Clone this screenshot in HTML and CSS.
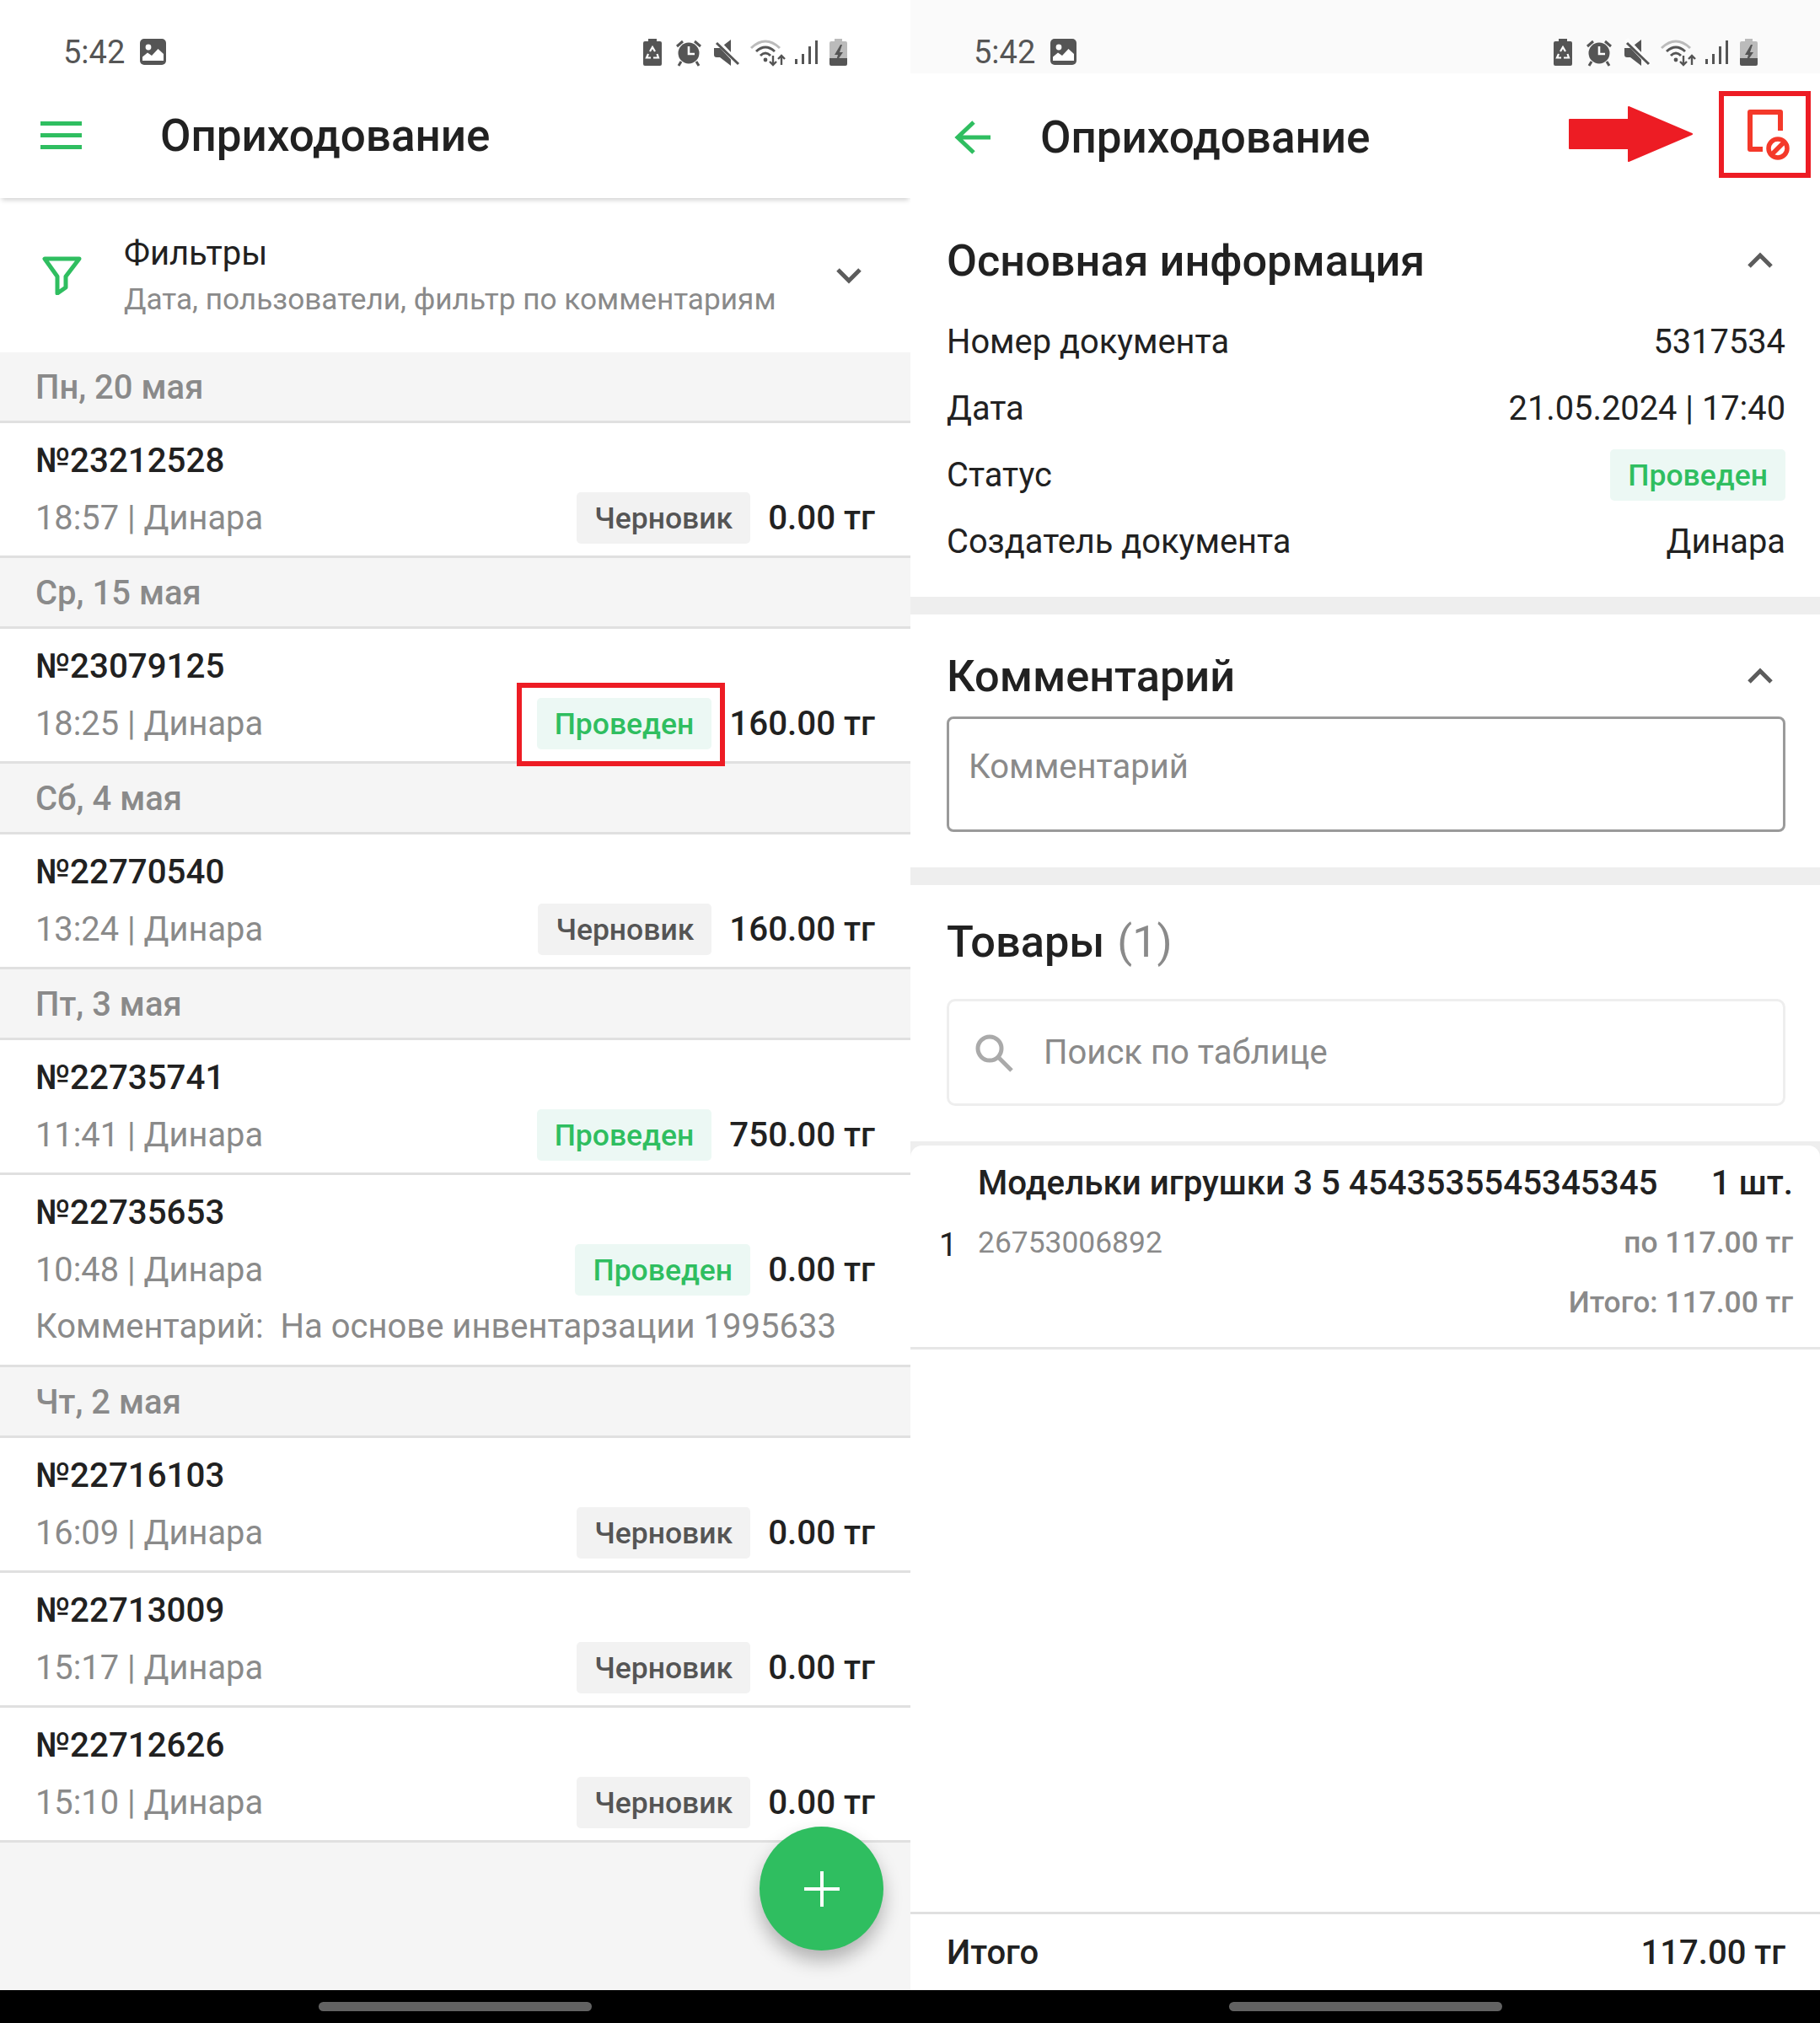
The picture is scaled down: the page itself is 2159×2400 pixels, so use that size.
FILE: index.html
```html
<!DOCTYPE html>
<html lang="ru">
  <head>
    <meta charset="UTF-8" />
    <title>Оприходование</title>
    <link rel="stylesheet" href="styles.css">
  </head>
  <body>
    <svg class="defs" width="0" height="0">
      <symbol id="st-image" viewBox="0 0 31 31">
        <rect width="31" height="31" rx="5" fill="#555" />
        <circle cx="10" cy="10" r="3.4" fill="#fff" />
        <path d="M3 26V21.5L9 16.5 14 20 21.5 12 28 18V26Z" fill="#fff" />
      </symbol>
      <symbol id="st-icons" viewBox="0 0 250 40">
        <!-- battery saver -->
        <path d="M9 4H19V7H23Q25 7 25 9V34Q25 36 23 36H5Q3 36 3 34V9Q3 7 5 7H9Z" fill="#555" />
        <path d="M11 19L14 14 17 19M19.5 22L21 26.5H15M12 26.5H7L9 22" stroke="#fff" stroke-width="2.2" fill="none" />
        <!-- alarm -->
        <circle cx="57" cy="21" r="12.5" fill="#555" />
        <path d="M57 13V22H64" stroke="#fff" stroke-width="2.6" fill="none" />
        <path d="M43 13L50 7M71 13L64 7M48 31L45 36M66 31L69 36" stroke="#555" stroke-width="3" fill="none" />
        <!-- mute -->
        <path d="M87 15H94L107 5V36L94 26H90Q87 26 87 23Z" fill="#555" />
        <path d="M89 5L117 35" stroke="#fff" stroke-width="6" fill="none" />
        <path d="M90 9L116 34" stroke="#555" stroke-width="3" fill="none" />
        <!-- wifi with traffic -->
        <path d="M131 15Q148 -1 165 15" stroke="#bbb" stroke-width="3" fill="none" />
        <path d="M137 19Q148 9 159 19M142 24Q148 18 154 24" stroke="#555" stroke-width="3" fill="none" />
        <circle cx="148" cy="29" r="2.4" fill="#555" />
        <path d="M157 24V35M153 31L157 35 161 31M167 35V24M163 28L167 24 171 28" stroke="#555" stroke-width="2.4" fill="none" />
        <!-- signal -->
        <path d="M183 28H186V34H183ZM191 22H194V34H191ZM199 13H202V34H199ZM207 6H210V34H207Z" fill="#555" />
        <!-- battery charging -->
        <path d="M230 4H239V7H243Q245 7 245 9V27H224V9Q224 7 226 7H230Z" fill="#bbb" />
        <path d="M224 27H245V34Q245 36 243 36H226Q224 36 224 34Z" fill="#555" />
        <path d="M237 11L230 23H234L231 33 240 20H236L239 11Z" fill="#555" />
      </symbol>
    </svg>

    <div class="screen">
      <section class="panel">
        <div class="statusbar">
          <span class="clock">5:42</span>
          <svg class="st-image"><use href="#st-image" /></svg>
          <svg class="st-icons"><use href="#st-icons" /></svg>
        </div>
        <header class="topbar">
          <div class="burger"><i></i><i></i><i></i></div>
          <h1>Оприходование</h1>
        </header>
        <div class="filters">
          <svg class="filter-icon" viewBox="0 0 47 46">
            <path d="M3 3H44L28 24V37L18 44V24Z" fill="none" stroke="#2fbe60" stroke-width="5" stroke-linejoin="round" />
          </svg>
          <div class="filter-text">
            <div class="filter-title">Фильтры</div>
            <div class="filter-sub">Дата, пользователи, фильтр по комментариям</div>
          </div>
          <svg class="chevron" viewBox="0 0 32 20">
            <path d="M3 3L16 16 29 3" fill="none" stroke="#5c5c5c" stroke-width="5" />
          </svg>
        </div>

        <div class="list">
          <div class="day">Пн, 20 мая</div>
          <div class="doc">
            <div class="doc-num">№23212528</div>
            <div class="doc-line">
              <span class="doc-meta">18:57 | Динара</span>
              <span class="badge draft">Черновик</span>
              <span class="sum">0.00 тг</span>
            </div>
          </div>

          <div class="day">Ср, 15 мая</div>
          <div class="doc">
            <div class="doc-num">№23079125</div>
            <div class="doc-line">
              <span class="doc-meta">18:25 | Динара</span>
              <span class="badge done">Проведен</span>
              <span class="sum">160.00 тг</span>
            </div>
          </div>

          <div class="day">Сб, 4 мая</div>
          <div class="doc">
            <div class="doc-num">№22770540</div>
            <div class="doc-line">
              <span class="doc-meta">13:24 | Динара</span>
              <span class="badge draft">Черновик</span>
              <span class="sum">160.00 тг</span>
            </div>
          </div>

          <div class="day">Пт, 3 мая</div>
          <div class="doc">
            <div class="doc-num">№22735741</div>
            <div class="doc-line">
              <span class="doc-meta">11:41 | Динара</span>
              <span class="badge done">Проведен</span>
              <span class="sum">750.00 тг</span>
            </div>
          </div>
          <div class="doc">
            <div class="doc-num">№22735653</div>
            <div class="doc-line">
              <span class="doc-meta">10:48 | Динара</span>
              <span class="badge done">Проведен</span>
              <span class="sum">0.00 тг</span>
            </div>
            <div class="doc-comment">Комментарий:&nbsp; На основе инвентарзации 1995633</div>
          </div>

          <div class="day">Чт, 2 мая</div>
          <div class="doc">
            <div class="doc-num">№22716103</div>
            <div class="doc-line">
              <span class="doc-meta">16:09 | Динара</span>
              <span class="badge draft">Черновик</span>
              <span class="sum">0.00 тг</span>
            </div>
          </div>
          <div class="doc">
            <div class="doc-num">№22713009</div>
            <div class="doc-line">
              <span class="doc-meta">15:17 | Динара</span>
              <span class="badge draft">Черновик</span>
              <span class="sum">0.00 тг</span>
            </div>
          </div>
          <div class="doc">
            <div class="doc-num">№22712626</div>
            <div class="doc-line">
              <span class="doc-meta">15:10 | Динара</span>
              <span class="badge draft">Черновик</span>
              <span class="sum">0.00 тг</span>
            </div>
          </div>
        </div>

        <button class="fab">
          <svg viewBox="0 0 42 42"><path d="M21 0V42M0 21H42" stroke="#fff" stroke-width="4" /></svg>
        </button>
        <div class="mark mark-badge"></div>
        <div class="navbar"><i></i></div>
      </section>

      <section class="panel panel-detail">
        <div class="statusbar statusbar-grey">
          <span class="clock">5:42</span>
          <svg class="st-image"><use href="#st-image" /></svg>
          <svg class="st-icons"><use href="#st-icons" /></svg>
        </div>
        <header class="detailbar">
          <svg class="back" viewBox="0 0 44 42">
            <path d="M23 3L4 21 23 39M4 21H43" fill="none" stroke="#2fbe60" stroke-width="5" />
          </svg>
          <h1>Оприходование</h1>
        </header>

        <div class="section section-info">
          <div class="sec-head">
            <h2>Основная информация</h2>
            <svg class="chevron" viewBox="0 0 32 20"><path d="M3 17L16 4 29 17" fill="none" stroke="#5c5c5c" stroke-width="5" /></svg>
          </div>
          <div class="info-row"><span>Номер документа</span><span>5317534</span></div>
          <div class="info-row"><span>Дата</span><span>21.05.2024 | 17:40</span></div>
          <div class="info-row"><span>Статус</span><span class="badge done">Проведен</span></div>
          <div class="info-row"><span>Создатель документа</span><span>Динара</span></div>
        </div>

        <div class="section section-comment">
          <div class="sec-head">
            <h2>Комментарий</h2>
            <svg class="chevron" viewBox="0 0 32 20"><path d="M3 17L16 4 29 17" fill="none" stroke="#5c5c5c" stroke-width="5" /></svg>
          </div>
          <div class="comment-box">Комментарий</div>
        </div>

        <div class="section section-goods">
          <div class="sec-head">
            <h2>Товары <span class="count">(1)</span></h2>
          </div>
          <div class="search">
            <svg viewBox="0 0 46 46">
              <circle cx="18" cy="18" r="14" fill="none" stroke="#aaa" stroke-width="5" />
              <path d="M28 28L44 44" stroke="#aaa" stroke-width="5" />
            </svg>
            <span>Поиск по таблице</span>
          </div>
        </div>

        <div class="goods">
          <div class="good">
            <div class="good-idx">1</div>
            <div class="good-body">
              <div class="good-line good-name"><span>Модельки игрушки 3 5 4543535545345345</span><span>1 шт.</span></div>
              <div class="good-line good-sub"><span>26753006892</span><span class="good-price">по 117.00 тг</span></div>
              <div class="good-line good-sub good-total"><span></span><span class="good-price">Итого: 117.00 тг</span></div>
            </div>
          </div>
        </div>

        <div class="spacer"></div>
        <div class="totalbar"><span>Итого</span><span>117.00 тг</span></div>

        <svg class="red-arrow" viewBox="0 0 148 66">
          <path d="M1 16H71V1L146 33 71 65V50H1Z" fill="#ed1c24" stroke="#ed1c24" stroke-width="2" stroke-linejoin="round" />
        </svg>
        <div class="mark mark-action">
          <svg viewBox="0 0 50 62">
            <path d="M18 47H3V3H39V25" fill="none" stroke="#f4392a" stroke-width="6" stroke-linejoin="round" />
            <circle cx="36" cy="46" r="11" fill="none" stroke="#f4392a" stroke-width="5.5" />
            <path d="M29 53L43 39" stroke="#f4392a" stroke-width="5.5" />
          </svg>
        </div>
        <div class="navbar"><i></i></div>
      </section>
    </div>
  </body>
</html>
```

FILE: styles.css
```css
* {
  margin: 0;
  padding: 0;
  box-sizing: border-box;
}

body {
  font-family: Roboto, "Noto Sans", sans-serif;
  background-color: #fff;
  color: #212121;
}

.defs {
  position: absolute;
}

.screen {
  display: flex;
  width: 2159px;
  height: 2400px;
  overflow: hidden;
}

.panel {
  position: relative;
  width: 1080px;
  height: 2400px;
  display: flex;
  flex-direction: column;
  background-color: #f5f5f5;
}

.panel-detail {
  width: 1079px;
  background-color: #fff;
}

/* status bar */
.statusbar {
  height: 87px;
  flex: none;
  display: flex;
  align-items: center;
  padding: 36px 0 0 75px;
  background-color: #fff;
}

.statusbar-grey {
  background-color: #fafafa;
}

.clock {
  font-size: 38px;
  color: #555;
  width: 91px;
}

.st-image {
  width: 31px;
  height: 31px;
}

.st-icons {
  width: 250px;
  height: 40px;
  margin-left: 563px;
}

/* top bars */
.topbar {
  height: 148px;
  flex: none;
  display: flex;
  align-items: center;
  padding-left: 48px;
  background-color: #fff;
  box-shadow: 0 4px 6px -2px rgba(0, 0, 0, 0.2);
  position: relative;
}

.topbar h1,
.detailbar h1 {
  font-size: 53px;
  font-weight: 500;
  color: #212121;
}

.burger {
  width: 49px;
  margin-right: 93px;
  margin-top: -1px;
}

.burger i {
  display: block;
  height: 5px;
  margin: 9px 0;
  background-color: #2fbe60;
}

.filters {
  height: 183px;
  flex: none;
  display: flex;
  align-items: center;
  padding-left: 50px;
  background-color: #fff;
}

.filter-icon {
  width: 47px;
  height: 46px;
  margin-right: 50px;
}

.filter-text {
  flex: 1;
  padding-top: 2px;
}

.filter-title {
  font-size: 40px;
  line-height: 54px;
}

.filter-sub {
  font-size: 35.2px;
  line-height: 54px;
  color: #8a8a8a;
}

.chevron {
  width: 32px;
  height: 20px;
  margin-right: 57px;
}

/* document list */
.day {
  height: 84px;
  display: flex;
  align-items: center;
  padding: 2px 42px 0;
  font-size: 40px;
  font-weight: 500;
  color: #8a8a8a;
  border-bottom: 3px solid #e0e0e0;
}

.doc {
  padding: 21px 42px 14px;
  background-color: #fff;
  border-bottom: 3px solid #e0e0e0;
}

.doc-num {
  font-size: 40.3px;
  font-weight: 500;
  line-height: 48px;
}

.doc-line {
  display: flex;
  align-items: center;
  gap: 21px;
  margin-top: 13px;
}

.doc-meta {
  flex: 1;
  font-size: 39.8px;
  color: #8a8a8a;
}

.sum {
  font-size: 40.3px;
  font-weight: 500;
}

.badge {
  height: 61px;
  display: flex;
  align-items: center;
  padding: 0 21px;
  font-size: 35.5px;
  font-weight: 500;
  border-radius: 5px;
}

.draft {
  background-color: #f2f2f2;
  color: #555;
}

.done {
  background-color: #ecf8f4;
  color: #2fbe60;
}

.doc-comment {
  font-size: 40px;
  line-height: 48px;
  color: #8a8a8a;
  margin: 13px 0 7px;
}

.fab {
  position: absolute;
  left: 901px;
  top: 2167px;
  width: 147px;
  height: 147px;
  border: none;
  border-radius: 50%;
  background-color: #2fbe60;
  box-shadow: 0 12px 22px rgba(0, 0, 0, 0.28);
  display: flex;
  align-items: center;
  justify-content: center;
}

.fab svg {
  width: 42px;
  height: 42px;
}

/* home indicator */
.navbar {
  position: absolute;
  left: 0;
  right: 0;
  bottom: 0;
  height: 39px;
  background-color: #000;
  display: flex;
  justify-content: center;
  padding-top: 14px;
}

.navbar i {
  display: block;
  width: 324px;
  height: 11px;
  border-radius: 6px;
  background-color: #626262;
}

/* red annotations */
.mark {
  position: absolute;
  border: 6px solid #ed1c24;
}

.mark-badge {
  left: 613px;
  top: 810px;
  width: 247px;
  height: 99px;
}

.mark-action {
  left: 959px;
  top: 108px;
  width: 109px;
  height: 103px;
}

.mark-action svg {
  position: absolute;
  left: 28px;
  top: 16px;
  width: 50px;
  height: 62px;
}

.red-arrow {
  position: absolute;
  left: 781px;
  top: 126px;
  width: 148px;
  height: 66px;
}

/* detail panel */
.detailbar {
  height: 149px;
  flex: none;
  display: flex;
  align-items: center;
  padding: 2px 0 0 52px;
}

.back {
  width: 44px;
  height: 42px;
  margin-right: 58px;
}

.section {
  padding: 0 41px 0 43px;
  border-bottom: 21px solid #eee;
}

.section-goods {
  border-bottom: none;
  padding-bottom: 42px;
}

.section-info {
  padding-bottom: 26px;
}

.section-comment {
  padding-bottom: 42px;
}

.sec-head {
  height: 80px;
  margin-top: 33px;
  display: flex;
  align-items: center;
  justify-content: space-between;
}

.sec-head h2 {
  font-size: 52.3px;
  font-weight: 500;
}

.sec-head .chevron {
  margin-right: 14px;
}

.count {
  font-weight: 400;
  color: #8a8a8a;
  margin-left: 2px;
}

.section-info .sec-head {
  margin-bottom: 17px;
}

.info-row {
  height: 79px;
  display: flex;
  align-items: center;
  justify-content: space-between;
  font-size: 39.8px;
}

.comment-box {
  height: 137px;
  margin-top: 8px;
  padding: 33px 23px 0;
  font-size: 40px;
  color: #8a8a8a;
  border: 3px solid #9a9a9a;
  border-radius: 8px;
}

.section-goods .sec-head {
  margin-top: 27px;
}

.search {
  height: 127px;
  margin-top: 28px;
  display: flex;
  align-items: center;
  padding-left: 30px;
  font-size: 40px;
  color: #8a8a8a;
  border: 3px solid #eee;
  border-radius: 10px;
}

.search svg {
  width: 46px;
  height: 46px;
  margin-right: 36px;
}

.goods {
  background-color: #eee;
  padding-top: 5px;
}

.good {
  display: flex;
  align-items: center;
  padding: 21px 32px 29px 34px;
  background-color: #fff;
  border-radius: 14px 14px 0 0;
}

.good-idx {
  width: 46px;
  font-size: 38px;
  margin-top: 4px;
}

.good-body {
  flex: 1;
}

.good-line {
  display: flex;
  justify-content: space-between;
  line-height: 48px;
}

.good-name {
  font-size: 40.3px;
  font-weight: 500;
}

.good-sub {
  margin-top: 22px;
  font-size: 35.4px;
  color: #8a8a8a;
}

.good-total {
  margin-top: 23px;
}

.good-price {
  font-weight: 500;
}

.spacer {
  flex: 1;
  border-top: 3px solid #e6e6e6;
}

.totalbar {
  height: 93px;
  margin-bottom: 39px;
  padding: 0 41px 0 43px;
  display: flex;
  align-items: center;
  justify-content: space-between;
  font-size: 40px;
  font-weight: 500;
  border-top: 3px solid #e0e0e0;
}
```
